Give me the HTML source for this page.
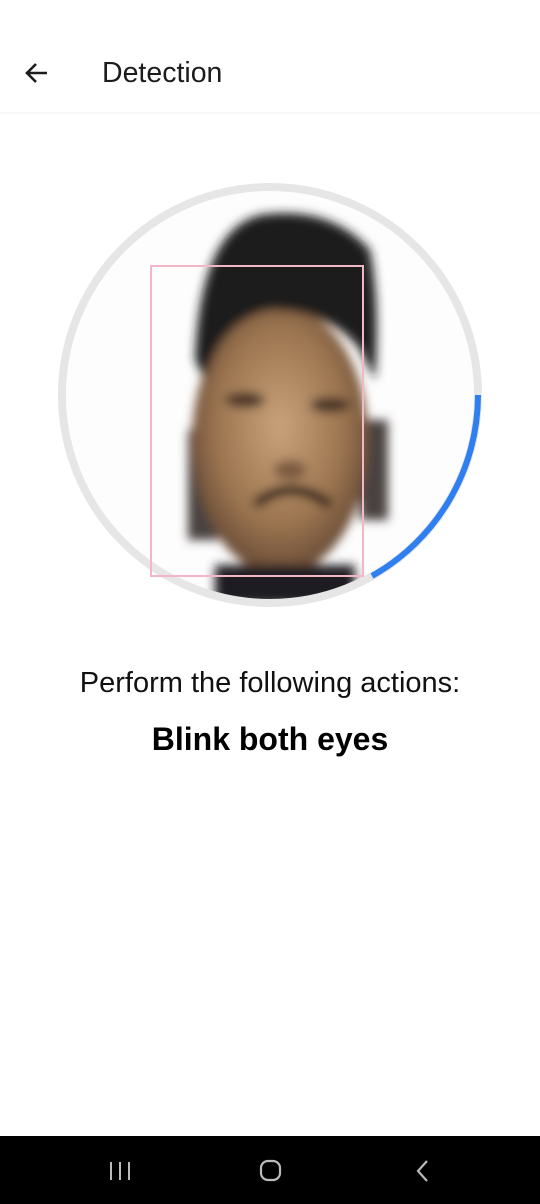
<!DOCTYPE html>
<html><head><meta charset="utf-8"><style>
html,body{margin:0;padding:0;background:#fff;width:540px;height:1204px;overflow:hidden;font-family:"Liberation Sans",Roboto,sans-serif;position:relative}
.hdr{position:absolute;left:0;top:0;width:540px;height:112px;background:#fff;border-bottom:2px solid #f6f6f6}
.title{position:absolute;left:102px;top:55px;font-size:28.5px;color:#1c1c1c;line-height:36px}
.t1{position:absolute;left:0;width:540px;text-align:center;top:667px;font-size:29px;color:#111}
.t2{position:absolute;left:0;width:540px;text-align:center;top:721px;font-size:32px;font-weight:bold;color:#000}
.nav{position:absolute;left:0;top:1136px;width:540px;height:68px;background:#000}
</style></head><body>
<div class="hdr">
<svg style="position:absolute;left:22px;top:60px" width="30" height="26" viewBox="0 0 30 26"><path d="M25 13H5M14 4L5 13L14 22" fill="none" stroke="#1c1c1c" stroke-width="2.6"/></svg>
<div class="title">Detection</div>
</div>
<svg style="position:absolute;left:0;top:0" width="540" height="640" viewBox="0 0 540 640">
<defs>
<clipPath id="c"><circle cx="270" cy="395" r="207"/></clipPath>
<radialGradient id="sk" cx="0.5" cy="0.45" r="0.6"><stop offset="0" stop-color="#c9a27a"/><stop offset="0.6" stop-color="#9c7550"/><stop offset="1" stop-color="#5a4030"/></radialGradient>
<filter id="b"><feGaussianBlur stdDeviation="5"/></filter>
</defs>
<circle cx="270" cy="395" r="207" fill="#fdfdfd"/>
<g clip-path="url(#c)">
<g filter="url(#b)">
<rect x="188" y="430" width="30" height="110" fill="#4a4240"/>
<rect x="360" y="420" width="28" height="100" fill="#4a4240"/>
<ellipse cx="280" cy="440" rx="88" ry="135" fill="url(#sk)"/>
<path d="M195 360 Q200 230 260 215 Q330 205 370 250 Q380 300 375 380 L360 350 Q330 310 270 310 Q220 320 205 380 Z" fill="#1e1a1a"/>
<rect x="215" y="565" width="140" height="40" fill="#1e1e22"/>
<ellipse cx="245" cy="400" rx="20" ry="8" fill="#4a3428"/>
<ellipse cx="330" cy="405" rx="20" ry="8" fill="#4a3428"/>
<path d="M255 505 Q290 475 330 505" fill="none" stroke="#2a1e18" stroke-width="10"/>
<ellipse cx="290" cy="470" rx="16" ry="10" fill="#7b5a40"/>
</g>
</g>
<circle cx="270" cy="395" r="208" fill="none" stroke="#e6e6e6" stroke-width="8"/>
<path d="M478 395 A208 208 0 0 1 372 576" fill="none" stroke="#2f7ff0" stroke-width="6"/>
<rect x="151" y="266" width="212" height="310" fill="none" stroke="#f2b7c6" stroke-width="2"/>
</svg>
<div class="t1">Perform the following actions:</div>
<div class="t2">Blink both eyes</div>
<div class="nav">
<svg style="position:absolute;left:108px;top:24px" width="24" height="22"><path d="M3 2V20M12 2V20M21 2V20" stroke="#bbb" stroke-width="2"/></svg>
<svg style="position:absolute;left:258px;top:23px" width="26" height="24"><rect x="3" y="2" width="19" height="19" rx="7" fill="none" stroke="#bbb" stroke-width="2.2"/></svg>
<svg style="position:absolute;left:412px;top:22px" width="20" height="26"><path d="M15 3L6 13L15 23" fill="none" stroke="#bbb" stroke-width="2.2"/></svg>
</div>
</body></html>
